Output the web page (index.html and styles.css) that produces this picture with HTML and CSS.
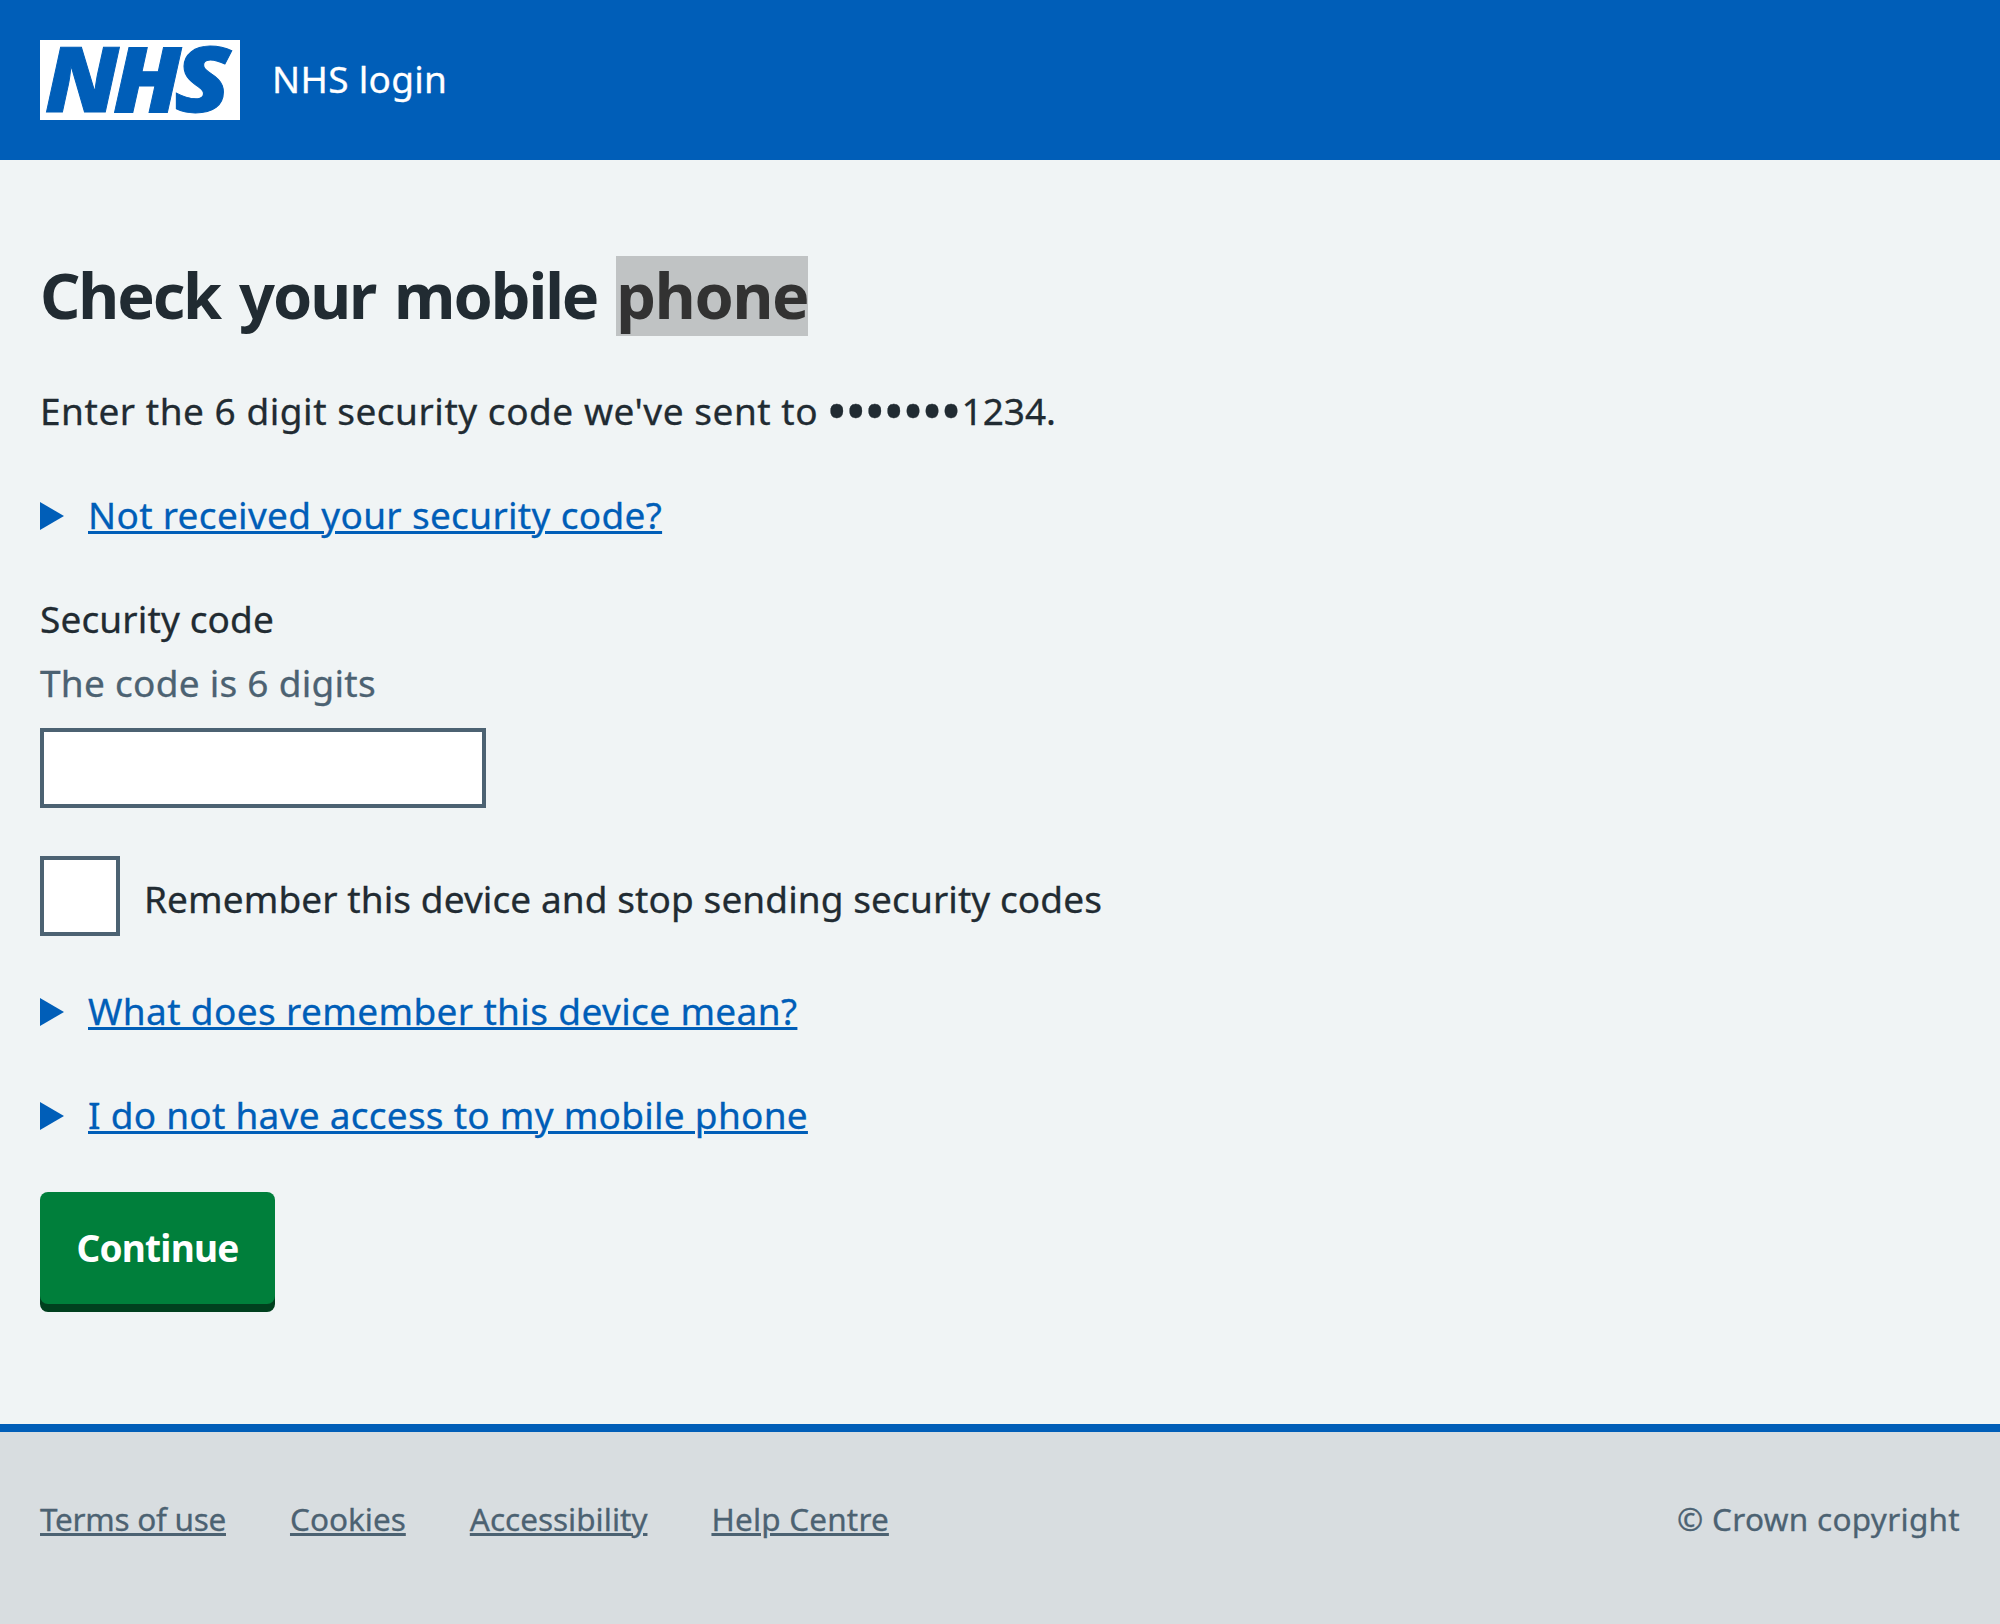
FILE: index.html
```html
<!DOCTYPE html>
<html lang="en">
<head>
<meta charset="utf-8">
<title>Check your mobile phone - NHS login</title>
<link rel="stylesheet" href="styles.css">
</head>
<body>
<header class="header">
  <svg class="logo" viewBox="0 0 200 80" role="img" aria-label="NHS">
    <rect width="200" height="80" fill="#fff"/>
    <text transform="translate(5 72) scale(1.018 .98)">N</text>
    <text transform="translate(73 72) scale(1.04 .98)">H</text>
    <text transform="translate(134.3 72) scale(1.12 .99)">S</text>
  </svg>
  <span class="service">NHS login</span>
</header>
<main class="main">
  <h1 class="title">Check your mobile <mark>phone</mark></h1>
  <p class="lead"><span class="lead-text">Enter the 6 digit security code we've sent to </span><span class="dots">•••••••</span>1234.</p>
  <div class="details"><span class="arrow"></span><a class="link code-link" href="#">Not received your security code?</a></div>
  <form class="form">
    <label class="label" for="code">Security code</label>
    <div class="hint">The code is 6 digits</div>
    <input class="input" id="code" type="text">
    <div class="remember">
      <input class="checkbox" id="remember" type="checkbox">
      <label class="remember-label" for="remember">Remember this device and stop sending security codes</label>
    </div>
    <div class="details"><span class="arrow"></span><a class="link meaning-link" href="#">What does remember this device mean?</a></div>
    <div class="details"><span class="arrow"></span><a class="link access-link" href="#">I do not have access to my mobile phone</a></div>
    <button class="button" type="button">Continue</button>
  </form>
</main>
<footer class="footer">
  <nav class="footer-links">
    <a class="terms" href="#">Terms of use</a>
    <a href="#">Cookies</a>
    <a href="#">Accessibility</a>
    <a class="help" href="#">Help Centre</a>
  </nav>
  <span class="copyright">© Crown copyright</span>
</footer>
</body>
</html>
```
FILE: styles.css
```css
* { box-sizing: border-box; }

body {
  margin: 0;
  min-height: 1624px;
  display: flex;
  flex-direction: column;
  background: #f0f4f5;
  color: #212b32;
  font: 37px/56px "Noto Sans", sans-serif;
  -webkit-text-stroke: .3px;
}

.header {
  display: flex;
  align-items: center;
  gap: 32px;
  height: 160px;
  padding: 0 40px;
  background: #005eb8;
}
.logo { width: 200px; height: 80px; }
.logo text {
  font: italic 900 92px "Noto Sans", sans-serif;
  fill: #005eb8;
  stroke: #005eb8;
  stroke-width: 1px;
}
.service { padding-bottom: 3px; color: #fff; letter-spacing: .3px; }

.main { height: 1264px; padding: 96px 40px 0; }

.title {
  height: 80px;
  margin: 0 0 47px;
  font-size: 63px;
  line-height: 77px;
  font-weight: 700;
  letter-spacing: -2.1px;
  word-spacing: 4.7px;
  -webkit-text-stroke: 0;
}
.title mark {
  display: inline-block;
  height: 80px;
  background: #c0c3c4;
  color: #323232;
  letter-spacing: -1.34px;
}

.lead { height: 56px; margin: 0 0 48px; }
.lead-text { letter-spacing: .53px; }
.dots {
  margin: 0 2px 0 -2px;
  font-size: 56px;
  line-height: 0;
  letter-spacing: -2.03px;
  vertical-align: -7px;
}

.details { display: flex; height: 56px; margin-bottom: 48px; }
.arrow {
  width: 24px;
  height: 28px;
  margin: 15px 24px 0 0;
  background: #005eb8;
  clip-path: polygon(0 0, 100% 50%, 0 100%);
}
.link {
  color: #005eb8;
  text-decoration: underline 3px;
  text-underline-offset: 2px;
}
.code-link { letter-spacing: .32px; }
.meaning-link { letter-spacing: .37px; }
.access-link { letter-spacing: .26px; }

.form { display: flex; flex-direction: column; align-items: flex-start; }
.form .details + .details { margin-bottom: 49px; }
.label { letter-spacing: .13px; }
.hint { margin: 8px 0 17px; color: #4c6272; letter-spacing: .26px; }
.input {
  width: 446px;
  height: 80px;
  padding: 8px;
  border: 4px solid #4c6272;
  border-radius: 0;
  background: #fff;
  font: inherit;
}
.remember { display: flex; gap: 24px; margin: 48px 0 47px; }
.checkbox {
  appearance: none;
  width: 80px;
  height: 80px;
  margin: 0;
  border: 4px solid #4c6272;
  background: #fff;
}
.remember-label { height: 56px; margin-top: 15px; letter-spacing: .09px; }

.button {
  width: 235px;
  height: 112px;
  padding: 0 0 1px;
  border: 0;
  border-radius: 8px;
  background: #007f3b;
  box-shadow: 0 8px 0 #00401e;
  color: #fff;
  font: 700 37px/56px "Noto Sans", sans-serif;
  letter-spacing: -.75px;
  -webkit-text-stroke: 0;
}

.footer {
  flex: 1;
  display: flex;
  justify-content: space-between;
  padding: 67px 40px 0;
  border-top: 8px solid #005eb8;
  background: #d8dde0;
  color: #4c6272;
  font-size: 31.5px;
  line-height: 40px;
}
.footer-links { display: flex; gap: 64px; }
.footer-links a {
  color: inherit;
  text-decoration: underline 3px;
  text-underline-offset: 2px;
}
.terms { letter-spacing: -.27px; }
.help { letter-spacing: .18px; }
.copyright { letter-spacing: .3px; }
```
